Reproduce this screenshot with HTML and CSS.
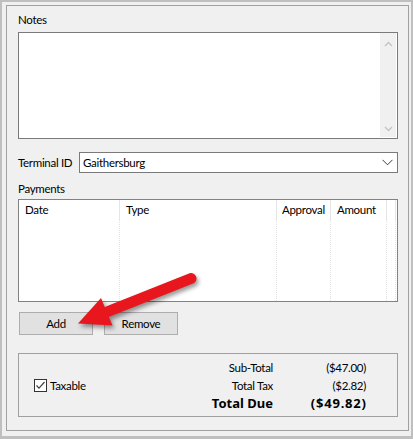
FILE: index.html
```html
<!DOCTYPE html>
<html lang="en">
<head>
  <meta charset="UTF-8" />
  <title>Payment</title>
  <link rel="stylesheet" href="styles.css">
</head>
<body>

<div class="window">
  <div class="group">

    <!-- Notes -->
    <div class="field-label">Notes</div>
    <div class="notes">
      <div class="notes-scroll">
        <svg width="9" height="6" viewBox="0 0 9 6"><path d="M1 5 L4.5 1.5 L8 5" fill="none" stroke="#c2c2c2" stroke-width="1.3"/></svg>
        <svg width="9" height="6" viewBox="0 0 9 6"><path d="M1 1 L4.5 4.5 L8 1" fill="none" stroke="#c2c2c2" stroke-width="1.3"/></svg>
      </div>
    </div>

    <!-- Terminal -->
    <div class="terminal-row">
      <span class="row-label">Terminal ID</span>
      <div class="combo">
        <span>Gaithersburg</span>
        <svg width="11" height="7" viewBox="0 0 11 7"><path d="M0.5 0.8 L5.5 5.8 L10.5 0.8" fill="none" stroke="#3c3c3c" stroke-width="1"/></svg>
      </div>
    </div>

    <!-- Payments list -->
    <div class="field-label payments-label">Payments</div>
    <div class="list">
      <div class="list-header">
        <div class="col col-date">Date</div>
        <div class="col col-type">Type</div>
        <div class="col col-approval">Approval</div>
        <div class="col col-amount">Amount</div>
        <div class="col col-end"></div>
      </div>
      <div class="list-body">
        <div class="col col-date"></div>
        <div class="col col-type"></div>
        <div class="col col-approval"></div>
        <div class="col col-amount"></div>
        <div class="col col-end"></div>
      </div>
    </div>

    <div class="buttons">
      <button class="btn">Add</button>
      <button class="btn">Remove</button>
    </div>

    <!-- Totals -->
    <div class="totals">
      <div class="check">
        <span class="check-box">
          <svg width="11" height="11" viewBox="0 0 11 11"><path d="M1.5 5.5 L4 8.2 L9.5 2" fill="none" stroke="#444" stroke-width="1.2"/></svg>
        </span>
        <span>Taxable</span>
      </div>
      <div class="sums">
        <span class="sum-label">Sub-Total</span><span class="sum-value">($47.00)</span>
        <span class="sum-label">Total Tax</span><span class="sum-value">($2.82)</span>
        <span class="sum-label total">Total Due</span><span class="sum-value total total-value">($49.82)</span>
      </div>
    </div>

  </div>

  <!-- callout arrow pointing at Add -->
  <svg class="arrow" width="150" height="80" viewBox="0 0 150 80">
    <line x1="129" y1="16.5" x2="46" y2="49.5" stroke="#e8171d" stroke-width="11" stroke-linecap="round"/>
    <polygon points="16,61.5 39,36 50.5,63.5" fill="#e8171d"/>
  </svg>
</div>

</body>
</html>
```

FILE: styles.css
```css
body {
  margin: 0;
  font-family: Lato, "Noto Sans", sans-serif;
  font-size: 11.5px;
  letter-spacing: -0.3px;
  color: #000;
}
.window {
  position: relative;
  width: 413px;
  height: 439px;
  box-sizing: border-box;
  border: 2px solid #bfbfbf;
  border-bottom-width: 3px;
  background: #f0f0f0;
  padding: 3px 2px 5px 4px;
}
.group {
  height: 426px;
  box-sizing: border-box;
  border: 1px solid #a0a0a0;
  padding: 6px 10px 0 11px;
}
.field-label {
  height: 16px;
  line-height: 16px;
}
.notes {
  margin-top: 4px;
  height: 107px;
  box-sizing: border-box;
  border: 1px solid #7a7a7a;
  background: #fff;
  display: flex;
  justify-content: flex-end;
  padding: 0 1px 1px 0;
}
.notes-scroll {
  width: 16px;
  background: #f0f0f0;
  display: flex;
  flex-direction: column;
  justify-content: space-between;
  align-items: center;
  padding: 8px 0 5px;
  box-sizing: border-box;
}
.terminal-row {
  display: flex;
  align-items: center;
  margin-top: 13px;
}
.row-label {
  width: 61px;
}
.combo {
  flex: 1;
  height: 21px;
  box-sizing: border-box;
  border: 1px solid #7a7a7a;
  background: #fff;
  display: flex;
  align-items: center;
  justify-content: space-between;
  padding: 0 4px 0 3px;
}
.payments-label {
  margin-top: 8px;
}
.list {
  margin-top: 2px;
  height: 103px;
  box-sizing: border-box;
  border: 1px solid #828282;
  background: #fff;
  display: flex;
  flex-direction: column;
}
.list-header {
  display: flex;
  height: 19px;
  line-height: 19px;
}
.list-body {
  flex: 1;
  display: flex;
}
.col {
  box-sizing: border-box;
  flex: none;
}
.list-header .col {
  border-right: 1px solid #e5e5e5;
}
.list-body .col {
  border-right: 1px dotted #e2e2e2;
}
.col-date {
  width: 101px;
  padding-left: 6px;
}
.col-type {
  width: 157px;
  padding-left: 6px;
}
.col-approval {
  width: 54px;
  padding-left: 5px;
}
.col-amount {
  width: 56px;
  padding-left: 6px;
}
.col-end {
  width: 9px;
}
.buttons {
  display: flex;
  gap: 11px;
  margin-top: 10px;
  padding-left: 1px;
}
.btn {
  width: 74px;
  height: 23px;
  padding: 0;
  border: 1px solid #adadad;
  background: #e1e1e1;
  font: inherit;
  letter-spacing: inherit;
  color: #000;
}
.totals {
  margin-top: 18px;
  height: 64px;
  box-sizing: border-box;
  border: 1px solid #a0a0a0;
  display: flex;
  align-items: center;
  padding: 0 31px 0 15px;
}
.check {
  display: flex;
  align-items: center;
  gap: 3px;
}
.check-box {
  width: 13px;
  height: 13px;
  box-sizing: border-box;
  border: 1px solid #333;
  background: #fff;
  display: flex;
}
.sums {
  margin-left: auto;
  display: grid;
  grid-template-columns: auto 93px;
  grid-template-rows: 18px 18px 17px;
  align-items: center;
  text-align: right;
}
.total {
  font-family: "Noto Sans", sans-serif;
  font-weight: bold;
  font-size: 13px;
  letter-spacing: 0;
}
.total-value {
  letter-spacing: 0.8px;
  margin-right: -0.8px;
}
.arrow {
  position: absolute;
  left: 60px;
  top: 260px;
  filter: drop-shadow(2px 3px 2px rgba(0, 0, 0, 0.4));
}
```
